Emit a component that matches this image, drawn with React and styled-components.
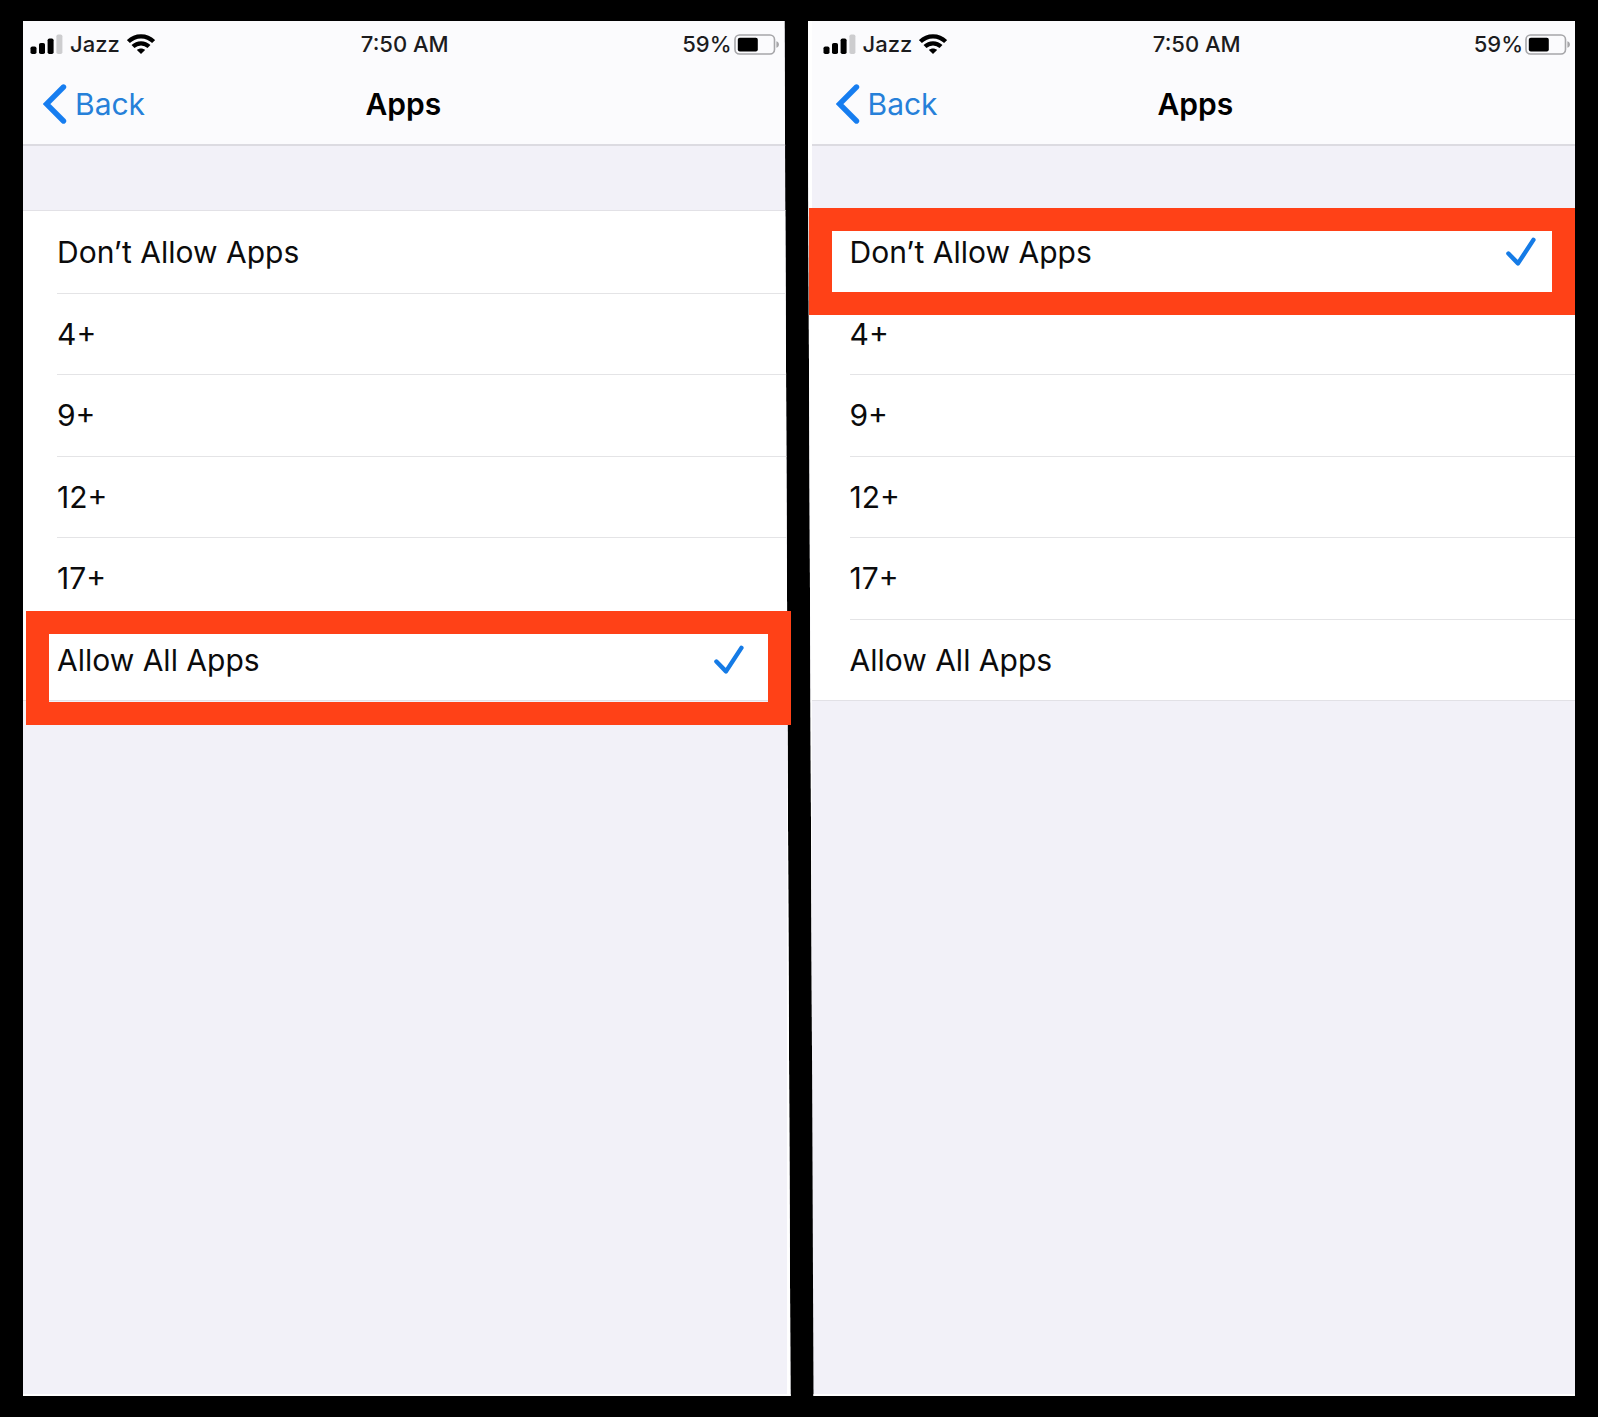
import React from "react";
import styled, { createGlobalStyle } from "styled-components";

const GlobalStyle = createGlobalStyle`
  *, *::before, *::after { box-sizing: border-box; }
  body {
    margin: 0;
    background: #fff;
    color: #0b0b0c;
    font-family: Inter, "Liberation Sans", sans-serif;
  }
`;

const Board = styled.main`
  display: grid;
  grid-template-columns: 1fr 1fr;
  column-gap: 17px;
  min-height: 100vh;
  margin-right: 2px;
  padding: 21px 23px;
  background: #000;
`;

const Phone = styled.section`
  position: relative;
  display: flex;
`;

/* The two screens lean towards each other along a slightly slanted divider. */
const Screen = styled.div`
  flex: 1;
  border-bottom: 2px solid #fff;
  background: #f2f1f8;
  ${({ $side }) =>
    $side === "left"
      ? `border-right: 4px solid #fff;
         clip-path: polygon(0 0, calc(100% - 6px) 0, 100% 100%, 0 100%);`
      : `border-left: 4px solid #fff;
         clip-path: polygon(0 0, 100% 0, 100% 100%, 6px 100%);`}
`;

const Header = styled.header`
  padding: ${({ $side }) => ($side === "left" ? "0 3px 3px 0" : "0 0 3px 4px")};
  border-bottom: 2px solid #dcdbe1;
  background: #fbfbfd;
`;

const StatusBar = styled.div`
  display: grid;
  grid-template-columns: 1fr auto 1fr;
  align-items: center;
  height: 46px;
  padding: 0 4px 0 7px;
  font-size: 22px;
  font-weight: 500;
  line-height: 28px;
  color: #1c1c1e;
`;

const StatusGroup = styled.div`
  display: flex;
  align-items: center;
  justify-content: ${({ $end }) => ($end ? "flex-end" : "flex-start")};
  gap: ${({ $end }) => ($end ? "2px" : "7px")};
`;

const NavBar = styled.nav`
  display: grid;
  grid-template-columns: 1fr auto 1fr;
  align-items: center;
  height: 74px;
  padding: 0 20px;
`;

const BackButton = styled.button`
  display: flex;
  align-items: center;
  justify-self: start;
  gap: 7px;
  padding: 0;
  border: 0;
  background: none;
  color: #2680d9;
  font: inherit;
  font-size: 30px;
  line-height: 36px;
  cursor: pointer;
`;

const Title = styled.h1`
  margin: 0;
  color: #000;
  font-size: 30px;
  font-weight: 600;
  line-height: 36px;
`;

const Options = styled.form`
  display: grid;
  grid-auto-rows: 1fr;
  height: 491px;
  margin-top: 64px;
  padding-left: ${({ $side }) => ($side === "left" ? "34px" : "38px")};
  border-top: 1px solid #e2e1e6;
  border-bottom: 1px solid #e2e1e6;
  background: #fff;
`;

const Option = styled.label`
  position: relative;
  display: flex;
  align-items: center;
  justify-content: space-between;
  padding-right: ${({ $side }) => ($side === "left" ? "43px" : "39px")};
  font-size: 30px;
  line-height: 36px;
  cursor: pointer;

  & + & {
    border-top: 1px solid #e4e4e6;
  }
`;

const Radio = styled.input`
  position: absolute;
  width: 1px;
  height: 1px;
  margin: 0;
  appearance: none;
  opacity: 0;

  & ~ svg {
    visibility: hidden;
  }

  &:checked ~ svg {
    visibility: visible;
  }
`;

const Highlight = styled.div`
  position: absolute;
  top: ${({ $top }) => $top}px;
  right: 0;
  left: ${({ $left }) => $left}px;
  height: ${({ $height }) => $height}px;
  border: 23px solid #ff4117;
  pointer-events: none;
`;

const SignalIcon = () => (
  <svg width="33" height="20" viewBox="0 0 33 20" aria-hidden="true">
    <rect x="0.5" y="12.5" width="6" height="7.5" rx="1.8" />
    <rect x="9" y="9" width="6" height="11" rx="1.8" />
    <rect x="17.6" y="4.5" width="6" height="15.5" rx="1.8" />
    <rect x="26.4" y="0.5" width="6" height="19.5" rx="1.8" fill="#cdcdcf" />
  </svg>
);

const WifiIcon = () => (
  <svg width="28" height="20" viewBox="0 0 28 20" aria-hidden="true">
    <g fill="none" stroke="#000" strokeWidth="4.2">
      <path d="M1.4 7.6C8.3 0.5 19.7 0.5 26.6 7.6" />
      <path d="M6 12.6C10.5 8.2 17.5 8.2 22 12.6" />
    </g>
    <path d="M14 20L9.9 16C12.2 14 15.8 14 18.1 16Z" />
  </svg>
);

const BatteryIcon = () => (
  <svg width="46" height="21" viewBox="0 0 46 21" aria-hidden="true">
    <rect x="1" y="1" width="39.5" height="19" rx="4.5" fill="none" stroke="#a6a6a9" strokeWidth="1.6" />
    <rect x="3.8" y="3.8" width="20" height="13.6" rx="2" />
    <path d="M42.4 7.2C45.8 8.2 45.8 12.8 42.4 13.8Z" fill="#a6a6a9" />
  </svg>
);

const ChevronIcon = () => (
  <svg width="25" height="40" viewBox="0 0 25 40" aria-hidden="true">
    <path d="M20.5 3L3.5 20L20.5 37" fill="none" stroke="#167df0" strokeWidth="5.4" strokeLinecap="round" strokeLinejoin="miter" />
  </svg>
);

const CheckIcon = () => (
  <svg width="30" height="30" viewBox="0 0 30 30" aria-hidden="true">
    <path d="M2.4 16.5L12 26.4L27.4 2.9" fill="none" stroke="#157be6" strokeWidth="4.4" strokeLinecap="round" strokeLinejoin="round" />
  </svg>
);

const OPTIONS = ["Don’t Allow Apps", "4+", "9+", "12+", "17+", "Allow All Apps"];

function AppsScreen({ side, selected, highlight }) {
  return (
    <Phone>
      <Screen $side={side}>
        <Header $side={side}>
          <StatusBar>
            <StatusGroup>
              <SignalIcon />
              <span>Jazz</span>
              <WifiIcon />
            </StatusGroup>
            <span>7:50 AM</span>
            <StatusGroup $end>
              <span>59%</span>
              <BatteryIcon />
            </StatusGroup>
          </StatusBar>
          <NavBar>
            <BackButton type="button">
              <ChevronIcon />
              Back
            </BackButton>
            <Title>Apps</Title>
          </NavBar>
        </Header>
        <Options $side={side} aria-label="Allowed apps">
          {OPTIONS.map((name) => (
            <Option key={name} $side={side}>
              <Radio type="radio" name={`apps-${side}`} value={name} defaultChecked={name === selected} />
              <span>{name}</span>
              <CheckIcon />
            </Option>
          ))}
        </Options>
      </Screen>
      <Highlight $top={highlight.top} $left={highlight.left} $height={highlight.height} />
    </Phone>
  );
}

export default function App() {
  return (
    <>
      <GlobalStyle />
      <Board>
        <AppsScreen side="left" selected="Allow All Apps" highlight={{ top: 590, left: 3, height: 114 }} />
        <AppsScreen side="right" selected="Don’t Allow Apps" highlight={{ top: 187, left: 1, height: 107 }} />
      </Board>
    </>
  );
}
